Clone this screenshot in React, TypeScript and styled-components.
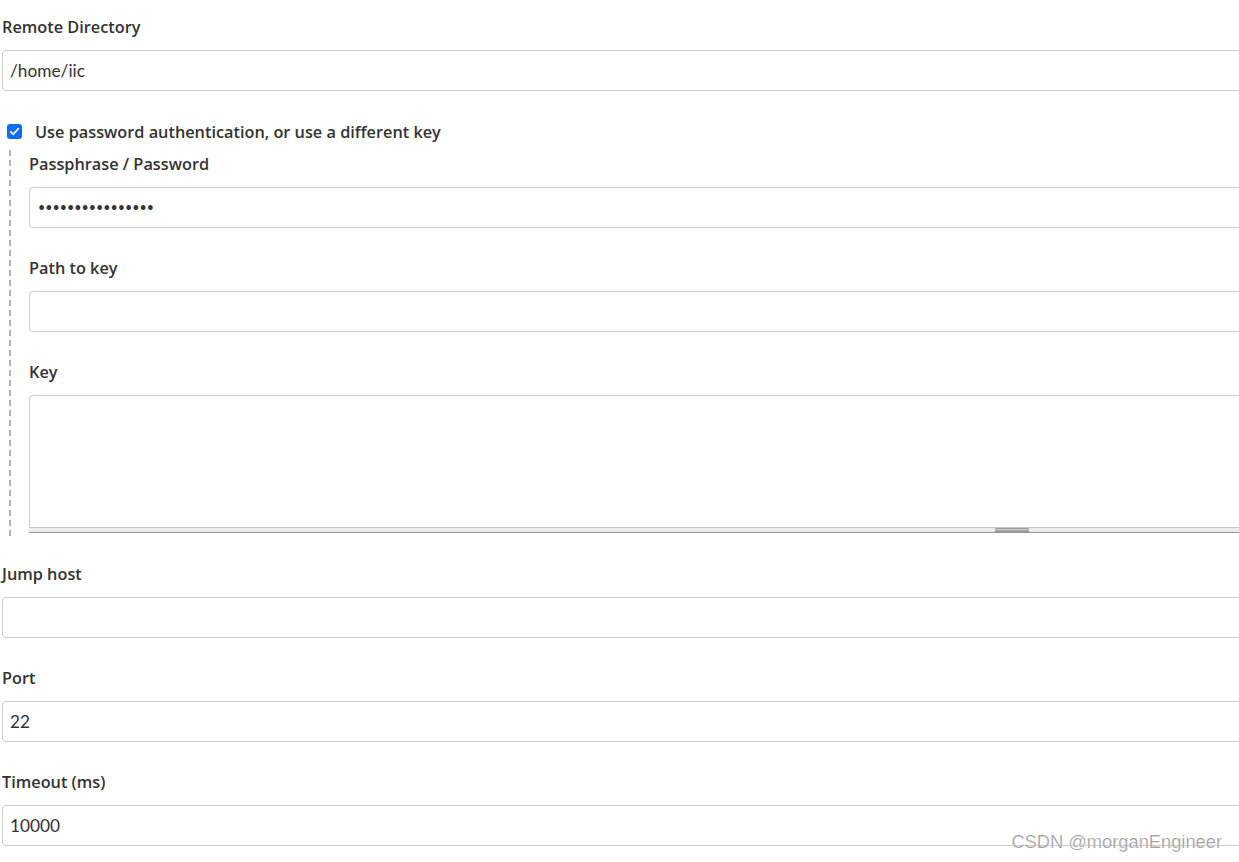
import React from "react";
import styled, { createGlobalStyle } from "styled-components";

const GlobalStyle = createGlobalStyle`
  html, body {
    margin: 0;
    padding: 0;
    background: #fff;
    overflow: hidden;
  }
  body {
    font-family: "Open Sans", Lato, sans-serif;
    color: #333;
  }
`;

const Page = styled.div`
  position: relative;
  width: 1239px;
  height: 862px;
  overflow: hidden;
`;

const Form = styled.div`
  width: 1992px;
  padding: 15px 0 0 2px;
  display: flex;
  flex-direction: column;
`;

const Field = styled.div<{ $last?: boolean }>`
  display: flex;
  flex-direction: column;
  margin-bottom: ${(p) => (p.$last ? "0" : "28px")};
`;

const Label = styled.div`
  font-size: 16.3px;
  font-weight: 600;
  line-height: 24px;
  margin-bottom: 11px;
  color: #333;
`;

const Input = styled.input`
  box-sizing: border-box;
  width: 100%;
  height: 41px;
  padding: 0 7px;
  border: 1px solid #ccc;
  border-radius: 4px;
  font-family: Lato, "Open Sans", sans-serif;
  font-size: 17.3px;
  color: #333;
  background: #fff;
  outline: none;

  &[type="password"] {
    font-size: 12.5px;
    padding-left: 8px;
  }
`;

const CheckRow = styled.label`
  display: flex;
  align-items: center;
  gap: 13px;
  margin: 29px 0 6px 5px;
  line-height: 24px;
  font-size: 16.3px;
  font-weight: 600;
  color: #333;
`;

const Box = styled.span`
  width: 15px;
  height: 15px;
  border-radius: 3px;
  background: #0d6efd;
  display: flex;
  align-items: center;
  justify-content: center;
  margin-top: -2px;
`;

const Nested = styled.div`
  margin-left: 6px;
  padding: 2px 0 7px 21px;
  margin-bottom: 22px;
  background-image: repeating-linear-gradient(
    to bottom,
    #b3b3b3 0,
    #b3b3b3 6px,
    transparent 6px,
    transparent 10px
  );
  background-size: 2px 100%;
  background-repeat: no-repeat;
  background-position: 1px 0;
  display: flex;
  flex-direction: column;
`;

const TextArea = styled.textarea`
  box-sizing: border-box;
  display: block;
  width: 100%;
  height: 132px;
  border: 1px solid #ccc;
  border-bottom: none;
  border-radius: 4px 4px 0 0;
  resize: none;
  outline: none;
  font-family: Lato, "Open Sans", sans-serif;
  font-size: 17px;
  padding: 8px;
`;

const Handle = styled.div`
  box-sizing: border-box;
  height: 6px;
  background: #e9edf0;
  border-top: 1px solid #c8c8c8;
  border-bottom: 1px solid #8d9aa3;
  display: flex;
  justify-content: center;
  align-items: center;
`;

const Grip = styled.span`
  width: 34px;
  height: 4px;
  box-sizing: border-box;
  background: #a6a6a6;
  border-top: 1px solid #9a9a9a;
  border-bottom: 1px solid #9a9a9a;
  box-shadow: inset 0 1px 0 #d0d0d0;
`;

const Watermark = styled.div`
  position: absolute;
  right: 17px;
  top: 830px;
  font-family: "Liberation Sans", Arial, sans-serif;
  font-size: 18.3px;
  color: #a0a0a0;
  line-height: 24px;
  -webkit-text-stroke: 0.2px #fff;
`;

const App = () => {
  return (
    <Page>
      <GlobalStyle />
      <Form>
        <Field $last>
          <Label>Remote Directory</Label>
          <Input defaultValue="/home/iic" />
        </Field>
        <CheckRow>
          <Box>
            <svg width="11" height="11" viewBox="0 0 16 16">
              <path
                d="M2.5 8.5 L6.2 12 L13.5 4"
                fill="none"
                stroke="#fff"
                strokeWidth="2.6"
                strokeLinecap="round"
                strokeLinejoin="round"
              />
            </svg>
          </Box>
          Use password authentication, or use a different key
        </CheckRow>
        <Nested>
          <Field>
            <Label>Passphrase / Password</Label>
            <Input type="password" defaultValue="xxxxxxxxxxxxxxxx" />
          </Field>
          <Field>
            <Label>Path to key</Label>
            <Input />
          </Field>
          <Field $last>
            <Label>Key</Label>
            <TextArea />
            <Handle>
              <Grip />
            </Handle>
          </Field>
        </Nested>
        <Field>
          <Label>Jump host</Label>
          <Input />
        </Field>
        <Field>
          <Label>Port</Label>
          <Input defaultValue="22" />
        </Field>
        <Field $last>
          <Label>Timeout (ms)</Label>
          <Input defaultValue="10000" />
        </Field>
      </Form>
      <Watermark>CSDN @morganEngineer</Watermark>
    </Page>
  );
};

export default App;
